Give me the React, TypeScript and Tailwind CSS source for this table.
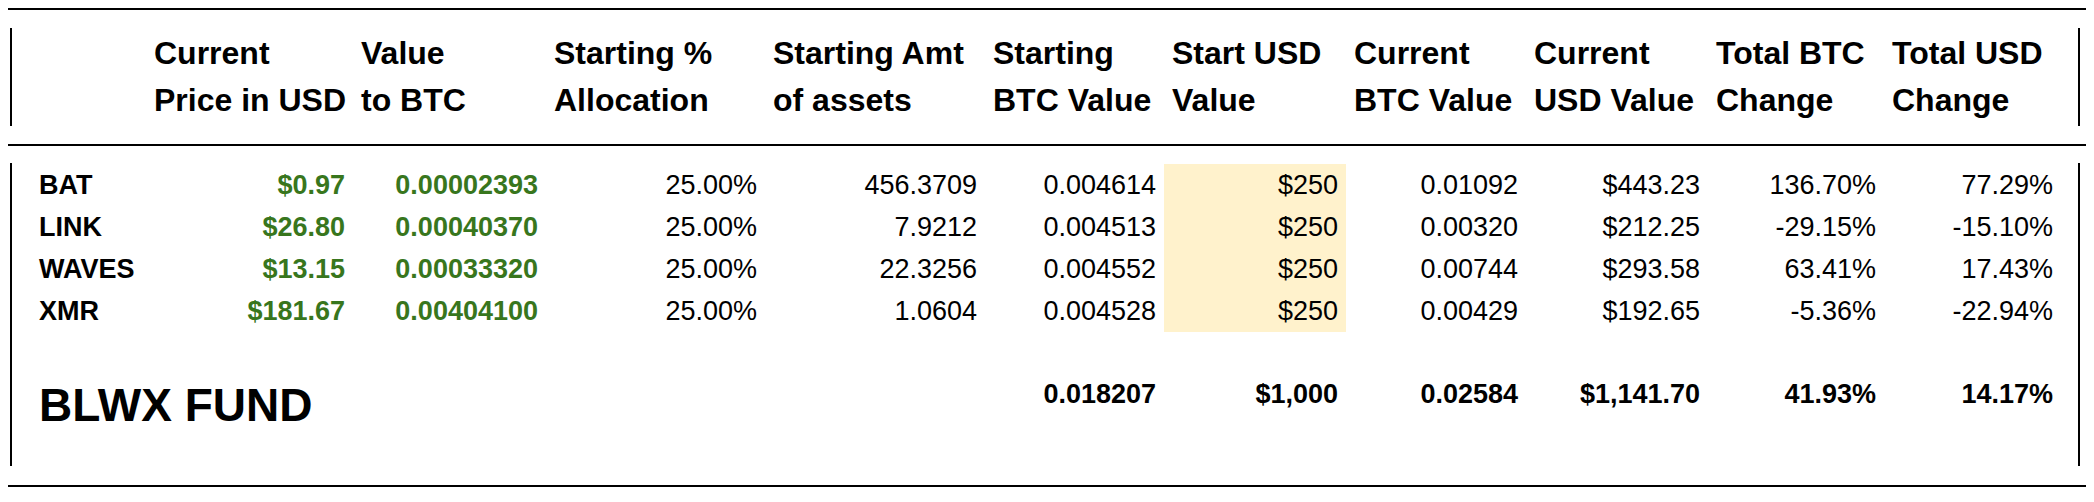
import React from "react";

const cols =
  "grid grid-cols-[134px_207px_193px_219px_220px_179px_182px_180px_182px_176px_177px]";

const headers: [string, string][] = [
  ["", ""],
  ["Current", "Price in USD"],
  ["Value", "to BTC"],
  ["Starting %", "Allocation"],
  ["Starting Amt", "of assets"],
  ["Starting", "BTC Value"],
  ["Start USD", "Value"],
  ["Current", "BTC Value"],
  ["Current", "USD Value"],
  ["Total BTC", "Change"],
  ["Total USD", "Change"],
];

const rows: string[][] = [
  ["BAT", "$0.97", "0.00002393", "25.00%", "456.3709", "0.004614", "$250", "0.01092", "$443.23", "136.70%", "77.29%"],
  ["LINK", "$26.80", "0.00040370", "25.00%", "7.9212", "0.004513", "$250", "0.00320", "$212.25", "-29.15%", "-15.10%"],
  ["WAVES", "$13.15", "0.00033320", "25.00%", "22.3256", "0.004552", "$250", "0.00744", "$293.58", "63.41%", "17.43%"],
  ["XMR", "$181.67", "0.00404100", "25.00%", "1.0604", "0.004528", "$250", "0.00429", "$192.65", "-5.36%", "-22.94%"],
];

const totals = ["0.018207", "$1,000", "0.02584", "$1,141.70", "41.93%", "14.17%"];

export default function App() {
  return (
    <div className="w-[2094px] h-[502px] bg-white pt-[8px] pl-[8px] pr-[8px] text-black font-['Liberation_Sans',Arial,sans-serif]">
      <div className="h-[2px] bg-black" />
      <div className="py-[18px] pl-[2px] pr-[6px]">
        <div className="h-[98px] border-x-2 border-black flex items-center">
          <div className={`${cols} text-[32px] font-bold leading-[47px]`}>
            {headers.map((h, i) => (
              <div key={i} className="pl-[8px] whitespace-nowrap">
                <div>{h[0] || "\u00a0"}</div>
                <div>{h[1] || "\u00a0"}</div>
              </div>
            ))}
          </div>
        </div>
      </div>
      <div className="h-[2px] bg-black" />
      <div className="pt-[17px] pb-[19px] pl-[2px] pr-[6px]">
        <div className="h-[303px] border-x-2 border-black pt-[1px]">
          {rows.map((r, ri) => (
            <div key={ri} className={`${cols} h-[42px] text-[27px] leading-[31px]`}>
              {r.map((c, ci) => {
                let cls = "flex items-center whitespace-nowrap ";
                if (ci === 0) cls += "pl-[27px] font-bold";
                else cls += "justify-end pr-[8px]";
                if (ci === 1 || ci === 2) cls += " font-bold text-[#38761d]";
                if (ci === 6) cls += " bg-[#fff2cc]";
                return (
                  <div key={ci} className={cls}>
                    {c}
                  </div>
                );
              })}
            </div>
          ))}
          <div className={`${cols} pt-[47px]`}>
            <div className="col-span-5 pl-[27px] text-[46px] font-bold leading-[53px] whitespace-nowrap">
              BLWX FUND
            </div>
            {totals.map((t, i) => (
              <div key={i} className="text-right pr-[8px] text-[27px] font-bold leading-[31px] whitespace-nowrap">
                {t}
              </div>
            ))}
          </div>
        </div>
      </div>
      <div className="h-[2px] bg-black" />
    </div>
  );
}
